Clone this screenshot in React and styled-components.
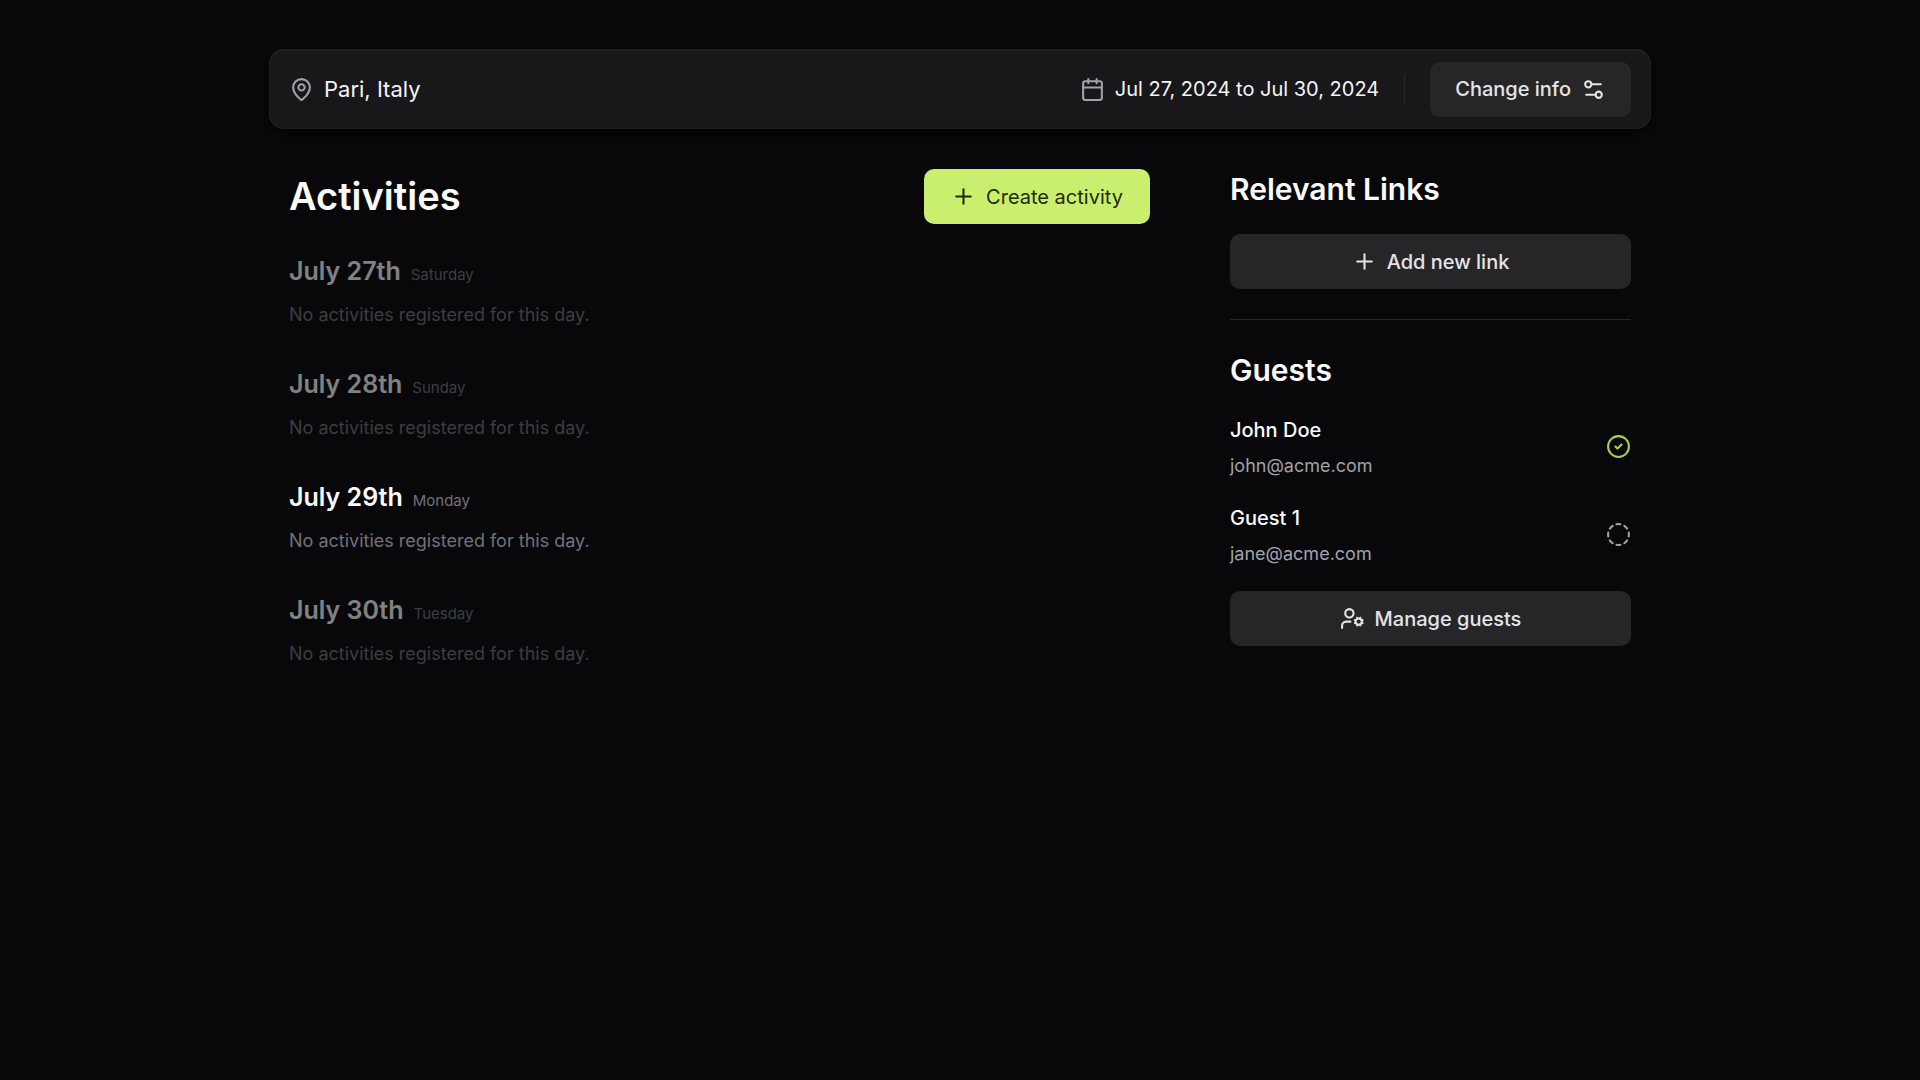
import React from "react";
import styled, { createGlobalStyle } from "styled-components";
import {
  MapPin,
  Calendar,
  Settings2,
  Plus,
  CircleCheck,
  CircleDashed,
  UserCog,
} from "lucide-react";

const GlobalStyle = createGlobalStyle`
  *, *::before, *::after { box-sizing: border-box; }
  body {
    margin: 0;
    min-height: 100vh;
    background: #08080a;
    color: #fafafa;
    font-family: Inter, "Liberation Sans", sans-serif;
    -webkit-font-smoothing: antialiased;
  }
  h1, h2, h3, p, ul { margin: 0; padding: 0; }
  ul { list-style: none; }
`;

const Page = styled.div`
  max-width: 1442px;
  margin: 0 auto;
  padding: 49px 30px;
  display: flex;
  flex-direction: column;
  gap: 40px;
`;

const TripBar = styled.header`
  min-height: 80px;
  padding: 0 20px;
  display: flex;
  align-items: center;
  justify-content: space-between;
  background: #18181a;
  border-radius: 15px;
  box-shadow:
    inset 0 0 0 1px #1f1f21,
    inset 0 1px 0 1px #1f1f21,
    0 5px 5px rgba(0, 0, 0, 0.5);
`;

const Detail = styled.div`
  display: flex;
  align-items: center;
  gap: 10px;
  font-size: ${(p) => (p.$large ? 22 : 20)}px;
  line-height: 30px;
  color: #f4f4f5;

  svg { color: #a1a1aa; }
`;

const TripActions = styled.div`
  display: flex;
  align-items: center;
  gap: 25px;
`;

const Divider = styled.span`
  width: 1px;
  height: 30px;
  background: #27272a;
`;

const Button = styled.button`
  height: 55px;
  width: ${(p) => (p.$full ? "100%" : "auto")};
  min-width: ${(p) => (p.$primary ? "226px" : "0")};
  padding: 0 25px;
  display: flex;
  align-items: center;
  justify-content: center;
  gap: 10px;
  border: 0;
  border-radius: 10px;
  font: inherit;
  font-size: 20px;
  line-height: 30px;
  font-weight: ${(p) => (p.$primary ? 400 : 500)};
  background: ${(p) => (p.$primary ? "#caef6e" : "#262628")};
  color: ${(p) => (p.$primary ? "#1f2a0c" : "#e4e4e7")};
  cursor: pointer;
`;

const Content = styled.main`
  padding: 0 20px;
  display: flex;
  gap: 80px;
`;

const Activities = styled.section`
  flex: 1;
  display: flex;
  flex-direction: column;
  gap: 30px;
`;

const SectionHead = styled.div`
  display: flex;
  align-items: center;
  justify-content: space-between;
`;

const Title = styled.h1`
  font-size: 38px;
  line-height: 45px;
  font-weight: 600;
`;

const Days = styled.ul`
  display: flex;
  flex-direction: column;
  gap: 40px;
`;

const Day = styled.li`
  display: flex;
  flex-direction: column;
  gap: 13px;
  opacity: ${(p) => (p.$dimmed ? 0.5 : 1)};
`;

const DayHead = styled.div`
  display: flex;
  align-items: baseline;
  gap: 10px;
`;

const DayName = styled.h2`
  font-size: 25px;
  line-height: 35px;
  font-weight: 600;
`;

const Weekday = styled.span`
  font-size: 15px;
  line-height: 20px;
  color: #71717a;
`;

const Muted = styled.p`
  font-size: 18px;
  line-height: 25px;
  color: ${(p) => (p.$bright ? "#a1a1aa" : "#71717a")};
`;

const Sidebar = styled.aside`
  width: 401px;
  display: flex;
  flex-direction: column;
  gap: 30px;
`;

const Panel = styled.section`
  display: flex;
  flex-direction: column;
  gap: 25px;
`;

const PanelTitle = styled.h2`
  font-size: 30px;
  line-height: 40px;
  font-weight: 600;
`;

const Rule = styled.div`
  height: 1px;
  background: #27272a;
`;

const Guests = styled.ul`
  display: flex;
  flex-direction: column;
  gap: 25px;
`;

const Guest = styled.li`
  display: flex;
  align-items: center;
  justify-content: space-between;
`;

const GuestInfo = styled.div`
  display: flex;
  flex-direction: column;
  gap: 8px;
`;

const GuestName = styled.h3`
  font-size: 20px;
  line-height: 30px;
  font-weight: 500;
`;

const days = [
  { date: "July 27th", weekday: "Saturday", dimmed: true },
  { date: "July 28th", weekday: "Sunday", dimmed: true },
  { date: "July 29th", weekday: "Monday", dimmed: false },
  { date: "July 30th", weekday: "Tuesday", dimmed: true },
];

const guests = [
  { name: "John Doe", email: "john@acme.com", confirmed: true },
  { name: "Guest 1", email: "jane@acme.com", confirmed: false },
];

export default function App() {
  return (
    <>
      <GlobalStyle />
      <Page>
        <TripBar>
          <Detail $large>
            <MapPin size={25} />
            <span>Pari, Italy</span>
          </Detail>
          <TripActions>
            <Detail>
              <Calendar size={25} />
              <span>Jul 27, 2024 to Jul 30, 2024</span>
            </Detail>
            <Divider />
            <Button type="button">
              Change info
              <Settings2 size={25} />
            </Button>
          </TripActions>
        </TripBar>

        <Content>
          <Activities>
            <SectionHead>
              <Title>Activities</Title>
              <Button type="button" $primary>
                <Plus size={25} />
                Create activity
              </Button>
            </SectionHead>
            <Days>
              {days.map((day) => (
                <Day key={day.date} $dimmed={day.dimmed}>
                  <DayHead>
                    <DayName>{day.date}</DayName>
                    <Weekday>{day.weekday}</Weekday>
                  </DayHead>
                  <Muted>No activities registered for this day.</Muted>
                </Day>
              ))}
            </Days>
          </Activities>

          <Sidebar>
            <Panel>
              <PanelTitle>Relevant Links</PanelTitle>
              <Button type="button" $full>
                <Plus size={25} />
                Add new link
              </Button>
            </Panel>
            <Rule />
            <Panel>
              <PanelTitle>Guests</PanelTitle>
              <Guests>
                {guests.map((guest) => (
                  <Guest key={guest.email}>
                    <GuestInfo>
                      <GuestName>{guest.name}</GuestName>
                      <Muted $bright>{guest.email}</Muted>
                    </GuestInfo>
                    {guest.confirmed ? (
                      <CircleCheck size={25} color="#a9cf4f" />
                    ) : (
                      <CircleDashed size={25} color="#a1a1aa" />
                    )}
                  </Guest>
                ))}
              </Guests>
              <Button type="button" $full>
                <UserCog size={25} />
                Manage guests
              </Button>
            </Panel>
          </Sidebar>
        </Content>
      </Page>
    </>
  );
}
